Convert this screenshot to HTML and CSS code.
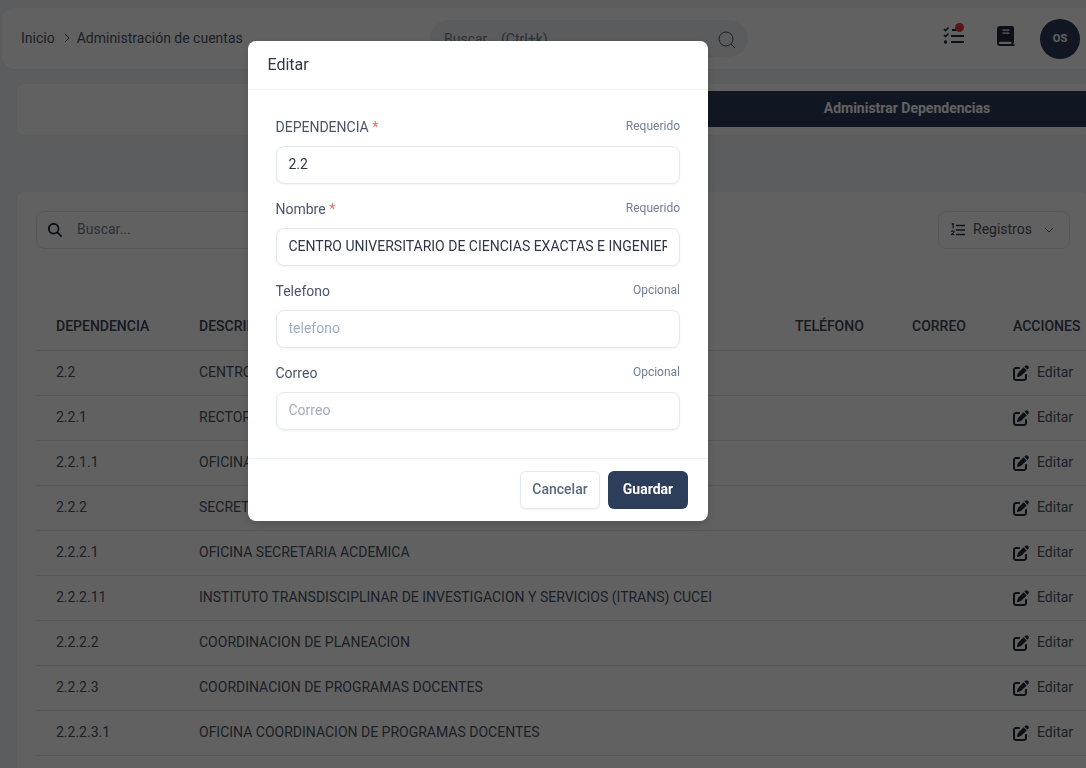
FILE: index.html
```html
<!DOCTYPE html>
<html lang="es">
<head>
<meta charset="utf-8">
<title>Administración de cuentas</title>
<link rel="stylesheet" href="styles.css">
</head>
<body>
<div class="page">
  <header class="topbar">
    <nav class="crumbs"><span>Inicio</span><svg class="crumb-sep" viewBox="0 0 8 10"><path d="M2 1l4 4-4 4" fill="none" stroke="currentColor" stroke-width="1"/></svg><span>Administración de cuentas</span></nav>
    <div class="top-search"><span class="top-search-text">Buscar... (Ctrl+k)</span>
      <svg class="top-search-icon" viewBox="0 0 18 18"><circle cx="8" cy="8" r="7" fill="none" stroke="currentColor" stroke-width="1"/><path d="M13 13l4 4" stroke="currentColor" stroke-width="1"/></svg>
    </div>
    <div class="top-actions">
      <span class="task-icon">
        <svg viewBox="0 0 22 20"><g fill="none" stroke="currentColor" stroke-width="1.6"><path d="M1 3l1.600 1.600L5.500 1.500M1 9l1.600 1.600L5.500 7.500"/></g><circle cx="2.500" cy="16" r="1.700" fill="currentColor"/><g stroke="currentColor" stroke-width="2"><path d="M9 4h5M8 10h13M8 16h13"/></g></svg>
        <i class="task-dot"></i>
      </span>
      <svg class="book-icon" viewBox="0 0 18 20"><path fill-rule="evenodd" d="M3 0h12a2 2 0 0 1 2 2v14.500q0 1-1 1.200v.6h1.500v1.700H3a3 3 0 0 1-3-3V3a3 3 0 0 1 3-3zM5.500 3.500v1.200h7V3.500zM5.500 6.500v1.200h7V6.500zM3 15.800a1 1 0 0 0 0 2.200h11.500v-2.200z"/></svg>
      <span class="avatar">OS</span>
    </div>
  </header>

  <section class="card tabs">
    <span class="tab-blank"></span>
    <span class="tab-active">Administrar Dependencias</span>
  </section>

  <section class="card list">
    <div class="tools">
      <div class="list-search">
        <svg class="list-search-icon" viewBox="0 0 512 512"><path d="M416 208c0 45.900-14.900 88.300-40 122.700L502.600 457.400c12.500 12.500 12.500 32.800 0 45.300s-32.800 12.500-45.300 0L330.700 376c-34.400 25.200-76.800 40-122.700 40C93.100 416 0 322.900 0 208S93.100 0 208 0S416 93.100 416 208zM208 352a144 144 0 1 0 0-288 144 144 0 1 0 0 288z"/></svg>
        <span>Buscar...</span>
      </div>
      <div class="records">
        <svg class="records-icon" viewBox="0 0 14 14"><path d="M5 2.500h9M5 7h9M5 11.500h9" stroke="currentColor" stroke-width="1.500"/><path d="M.8 1.200l1.400-.7V5.500M.2 8.500q1.500-1.300 2.700-.3.700 1-2.500 3.300h3" fill="none" stroke="currentColor" stroke-width="1.200"/></svg>
        <span>Registros</span>
        <svg class="records-caret" viewBox="0 0 10 6"><path d="M1 1l4 4 4-4" fill="none" stroke="currentColor" stroke-width="1"/></svg>
      </div>
    </div>
    <table class="grid">
      <colgroup><col class="c-dep"><col class="c-desc"><col class="c-tel"><col class="c-mail"><col class="c-act"></colgroup>
      <thead><tr><th>DEPENDENCIA</th><th>DESCRIPCIÓN</th><th>TELÉFONO</th><th>CORREO</th><th>ACCIONES</th></tr></thead>
      <tbody>
        <tr><td>2.2</td><td>CENTRO UNIVERSITARIO DE CIENCIAS EXACTAS E INGENIERIAS</td><td></td><td></td><td><span class="edit"><svg viewBox="0 0 512 512"><use href="#pen"/></svg>Editar</span></td></tr>
        <tr><td>2.2.1</td><td>RECTORIA</td><td></td><td></td><td><span class="edit"><svg viewBox="0 0 512 512"><use href="#pen"/></svg>Editar</span></td></tr>
        <tr><td>2.2.1.1</td><td>OFICINA RECTORIA</td><td></td><td></td><td><span class="edit"><svg viewBox="0 0 512 512"><use href="#pen"/></svg>Editar</span></td></tr>
        <tr><td>2.2.2</td><td>SECRETARIA ACADEMICA</td><td></td><td></td><td><span class="edit"><svg viewBox="0 0 512 512"><use href="#pen"/></svg>Editar</span></td></tr>
        <tr><td>2.2.2.1</td><td>OFICINA SECRETARIA ACDEMICA</td><td></td><td></td><td><span class="edit"><svg viewBox="0 0 512 512"><use href="#pen"/></svg>Editar</span></td></tr>
        <tr><td>2.2.2.11</td><td>INSTITUTO TRANSDISCIPLINAR DE INVESTIGACION Y SERVICIOS (ITRANS) CUCEI</td><td></td><td></td><td><span class="edit"><svg viewBox="0 0 512 512"><use href="#pen"/></svg>Editar</span></td></tr>
        <tr><td>2.2.2.2</td><td>COORDINACION DE PLANEACION</td><td></td><td></td><td><span class="edit"><svg viewBox="0 0 512 512"><use href="#pen"/></svg>Editar</span></td></tr>
        <tr><td>2.2.2.3</td><td>COORDINACION DE PROGRAMAS DOCENTES</td><td></td><td></td><td><span class="edit"><svg viewBox="0 0 512 512"><use href="#pen"/></svg>Editar</span></td></tr>
        <tr><td>2.2.2.3.1</td><td>OFICINA COORDINACION DE PROGRAMAS DOCENTES</td><td></td><td></td><td><span class="edit"><svg viewBox="0 0 512 512"><use href="#pen"/></svg>Editar</span></td></tr>
      </tbody>
    </table>
  </section>
</div>

<svg class="sprite" aria-hidden="true"><symbol id="pen" viewBox="0 0 512 512"><path d="M471.600 21.700c-21.900-21.900-57.300-21.900-79.200 0L362.300 51.700l97.900 97.900 30.100-30.100c21.900-21.900 21.900-57.300 0-79.200L471.600 21.700zm-299.200 220c-6.100 6.100-10.800 13.600-13.500 21.900l-29.600 88.800c-2.900 8.600-.6 18.100 5.800 24.600s15.900 8.700 24.600 5.800l88.800-29.600c8.200-2.700 15.700-7.400 21.900-13.500L437.700 172.300 339.700 74.300 172.400 241.700zM96 64C43 64 0 107 0 160V416c0 53 43 96 96 96H352c53 0 96-43 96-96V320c0-17.700-14.300-32-32-32s-32 14.300-32 32v96c0 17.700-14.300 32-32 32H96c-17.700 0-32-14.300-32-32V160c0-17.700 14.300-32 32-32h96c17.700 0 32-14.300 32-32s-14.300-32-32-32H96z"/></symbol></svg>

<div class="overlay">
  <div class="modal">
    <div class="modal-head">Editar</div>
    <form class="modal-body">
      <div class="field">
        <div class="field-top"><label>DEPENDENCIA <b>*</b></label><small>Requerido</small></div>
        <input type="text" value="2.2">
      </div>
      <div class="field">
        <div class="field-top"><label>Nombre <b>*</b></label><small>Requerido</small></div>
        <input type="text" value="CENTRO UNIVERSITARIO DE CIENCIAS EXACTAS E INGENIERIAS">
      </div>
      <div class="field">
        <div class="field-top"><label>Telefono</label><small>Opcional</small></div>
        <input type="text" placeholder="telefono">
      </div>
      <div class="field">
        <div class="field-top"><label>Correo</label><small>Opcional</small></div>
        <input type="text" placeholder="Correo">
      </div>
    </form>
    <div class="modal-foot">
      <button type="button" class="btn-ghost">Cancelar</button>
      <button type="button" class="btn-save">Guardar</button>
    </div>
  </div>
</div>
</body>
</html>
```
FILE: styles.css
```css
* { box-sizing: border-box; }
html, body { margin: 0; height: 100%; overflow: hidden; }
body { font-family: Roboto, "Liberation Sans", sans-serif; font-size: 14px; color: #2d3748; background: #f0f4f8; }
.page { width: 1086px; height: 768px; padding: 8px 0 0 0; overflow: hidden; }
.sprite { display: none; }

.topbar { margin-left: 2px; width: 1100px; height: 61px; background: #fff; border-radius: 12px; display: flex; align-items: center; padding: 0 0 0 19px; box-shadow: 0 1px 2px rgba(0,0,0,.05); position: relative; }
.crumbs { display: flex; align-items: center; color: #4a5568; width: 409px; flex: none; padding-bottom: 2px; }
.crumb-sep { width: 8px; height: 10px; margin: 0 6px 0 8px; }
.top-search { width: 318px; height: 37px; flex: none; border-radius: 19px; background: #edf2f7; display: flex; align-items: center; justify-content: space-between; padding: 0 12px 0 14px; color: #718096; }
.top-search-icon { width: 18px; height: 18px; color: #4a5568; margin-top: 2px; }
.top-actions { display: flex; align-items: flex-start; margin-left: 195px; }
.task-icon { position: relative; width: 21px; height: 20px; display: block; color: #1e293b; margin-top: 7px; }
.task-icon svg { width: 22px; height: 20px; display: block; }
.task-dot { position: absolute; top: -3px; right: 0; width: 9px; height: 9px; border-radius: 50%; background: #e53e3e; }
.book-icon { width: 18px; height: 20px; fill: #1e293b; margin: 7px 0 0 33px; }
.avatar { margin-left: 25px; width: 40px; height: 40px; border-radius: 50%; background: #2d3e5a; color: #fff; font-size: 11px; font-weight: 700; display: flex; align-items: center; justify-content: center; }

.card { margin-left: 16px; width: 1074px; background: #fff; border: 1px solid #edf2f7; border-radius: 8px; }
.tabs { margin-top: 14px; height: 53px; padding: 7px; display: flex; }
.tab-blank { width: 676px; flex: none; }
.tab-active { width: 414px; flex: none; height: 36px; padding-bottom: 2px; background: #2d3e5a; color: #fff; font-weight: 700; display: flex; align-items: center; justify-content: center; }

.list { margin-top: 55px; height: 700px; padding: 19px 19px 0; }
.tools { display: flex; justify-content: space-between; }
.list-search { width: 260px; height: 38px; border: 1px solid #e2e8f0; border-radius: 8px; display: flex; align-items: center; padding: 0 0 2px 11px; color: #718096; }
.list-search-icon { width: 14px; height: 14px; margin: 2px 15px 0 0; fill: #1a202c; }
.records { width: 132px; height: 38px; border: 1px solid #e2e8f0; border-radius: 8px; display: flex; align-items: center; padding: 0 0 2px 12px; color: #4a5568; }
.records-icon { width: 14px; height: 14px; margin: 2px 8px 0 0; color: #2d3748; }
.records-caret { width: 10px; height: 6px; margin: 2px 0 0 12px; }

.grid { margin-top: 38px; width: 1077px; border-collapse: collapse; table-layout: fixed; color: #4a5568; }
.c-dep { width: 163px; } .c-desc { width: 596px; } .c-tel { width: 117px; } .c-mail { width: 101px; } .c-act { width: 100px; }
.grid th { height: 63px; padding: 16px 0 0; text-align: left; font-weight: 500; white-space: nowrap; border-bottom: 1px solid #e2e8f0; line-height: 16px; color: #3b4558; }
.grid td { height: 45px; padding: 0 0 2px; border-bottom: 1px solid #e2e8f0; white-space: nowrap; overflow: hidden; }
.grid th:first-child, .grid td:first-child { padding-left: 20px; }
.edit { display: inline-flex; align-items: center; color: #4a5568; margin-top: 4px; }
.edit svg { width: 16px; height: 16px; margin: 2px 8px 0 0; fill: #1e293b; color: #1e293b; }

.overlay { position: fixed; inset: 0; background: rgba(0,0,0,.62); }
.modal { position: absolute; left: 248px; top: 41px; width: 460px; height: 480px; background: #fff; border-radius: 8px; display: flex; flex-direction: column; box-shadow: 0 4px 12px rgba(0,0,0,.15); }
.modal-head { height: 49px; flex: none; padding: 0 0 2px 19.5px; display: flex; align-items: center; font-size: 16px; font-weight: 400; color: #2d3748; border-bottom: 1px solid #edf2f7; }
.modal-body { flex: 1; padding: 28px 28px 0 27.5px; display: flex; flex-direction: column; gap: 8px; }
.field { height: 74px; }
.field-top { height: 18px; display: flex; justify-content: space-between; align-items: flex-start; margin-bottom: 10px; }
.field-top label { line-height: 18px; color: #4a5568; }
.field-top label b { color: #f56565; font-weight: 400; }
.field-top small { font-size: 12px; line-height: 15px; color: #718096; margin-top: 1px; }
.field input { display: block; width: 100%; height: 38px; padding: 0 12px 2px; font: 14px Roboto, sans-serif; color: #2d3748; background: #fff; border: 1px solid #e2e8f0; border-radius: 8px; box-shadow: 0 1px 2px rgba(0,0,0,.05); outline: 0; }
.field input::placeholder { color: #a0aec0; opacity: 1; }
.modal-foot { height: 63px; flex: none; border-top: 1px solid #edf2f7; display: flex; justify-content: flex-end; align-items: flex-start; gap: 8px; padding: 12px 20px 0; }
.modal-foot button { width: 80px; height: 38px; padding: 0 0 2px; border-radius: 6px; font: 500 14px Roboto, sans-serif; }
.btn-ghost { background: #fff; border: 1px solid #e2e8f0; color: #5a6880; box-shadow: 0 1px 2px rgba(0,0,0,.05); }
.btn-save { background: #2d3e5a; border: 0; color: #fff; font-weight: 700 !important; }
```
